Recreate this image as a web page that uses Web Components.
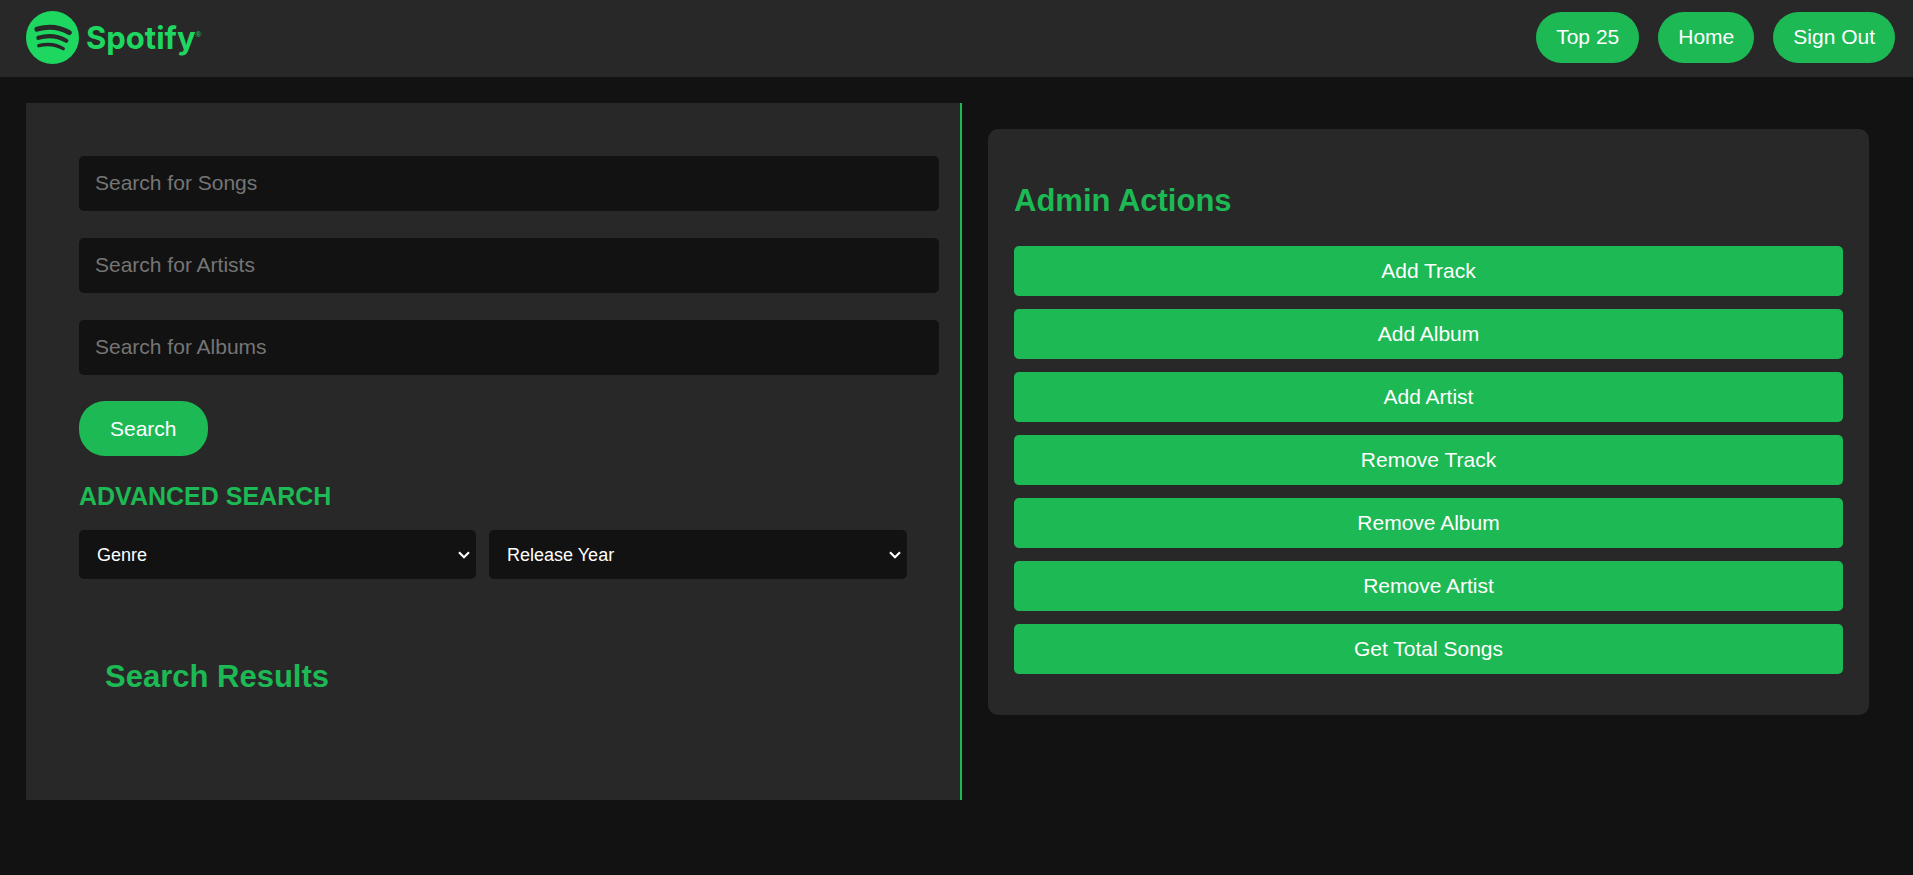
<!DOCTYPE html>
<html lang="en">
<head>
<meta charset="utf-8">
<meta name="viewport" content="width=device-width, initial-scale=1">
<title>Spotify Admin</title>
<style>
  :root {
    --bg: #121212;
    --panel: #282828;
    --green: #1db954;
    --logo: #1ed760;
  }
  body {
    margin: 0;
    background: var(--bg);
    color: #fff;
    font-family: "Liberation Sans", Arial, sans-serif;
    font-size: 21px;
  }
</style>
</head>
<body>
<app-shell>
  <app-header slot="header">
    <pill-button>Top 25</pill-button>
    <pill-button>Home</pill-button>
    <pill-button>Sign Out</pill-button>
  </app-header>
  <search-panel>
    <search-field label="Search for Songs"></search-field>
    <search-field label="Search for Artists"></search-field>
    <search-field label="Search for Albums"></search-field>
  </search-panel>
  <admin-card>
    <action-button>Add Track</action-button>
    <action-button>Add Album</action-button>
    <action-button>Add Artist</action-button>
    <action-button>Remove Track</action-button>
    <action-button>Remove Album</action-button>
    <action-button>Remove Artist</action-button>
    <action-button>Get Total Songs</action-button>
  </admin-card>
</app-shell>

<script>
function define(name, render) {
  customElements.define(name, class extends HTMLElement {
    constructor() {
      super();
      this.attachShadow({ mode: 'open' }).innerHTML = render(this);
    }
  });
}

define('app-shell', () => `
  <style>
    :host { display: block; }
    main {
      display: grid;
      grid-template-columns: minmax(0, 17fr) minmax(0, 16fr);
      column-gap: 26px;
      align-items: start;
      padding: 26px 44px 26px 26px;
    }
  </style>
  <slot name="header"></slot>
  <main><slot></slot></main>`);

define('brand-logo', () => `
  <style>
    :host { display: block; }
    a { display: flex; align-items: center; gap: 7px; color: var(--logo); text-decoration: none; }
    svg { display: block; width: 53px; height: 53px; }
    .disc { fill: currentColor; }
    .waves { fill: none; stroke: var(--panel); stroke-linecap: round; }
    .word { display: flex; align-items: center; font: 700 31px/40px Inter, sans-serif; font-variant-ligatures: none; }
    .mark { font: 400 8px/10px "Liberation Sans", sans-serif; padding-bottom: 6px; }
  </style>
  <a href="#">
    <svg viewBox="0 0 53 53" aria-hidden="true">
      <circle class="disc" cx="26.5" cy="26.5" r="26.5"/>
      <g class="waves">
        <path stroke-width="5" d="M11 18.2Q28.5 13.2 43.3 21.6"/>
        <path stroke-width="4.2" d="M12.4 26.8Q27.5 22.4 40.3 29.8"/>
        <path stroke-width="3.4" d="M12.8 34.7Q26.3 31.3 37.2 37.6"/>
      </g>
    </svg>
    <span class="word">Spotify<span class="mark">®</span></span>
  </a>`);

define('app-header', () => `
  <style>
    :host { display: block; }
    header {
      display: flex;
      align-items: center;
      justify-content: space-between;
      padding: 11px 18px 13px 26px;
      background: var(--panel);
    }
    nav { display: flex; gap: 19px; }
  </style>
  <header>
    <brand-logo></brand-logo>
    <nav><slot></slot></nav>
  </header>`);

define('pill-button', () => `
  <style>
    :host { display: block; }
    button {
      display: block;
      padding: 12px 20px 14px;
      border: 0;
      border-radius: 26px;
      background: var(--green);
      color: #fff;
      font: inherit;
      line-height: 25px;
      cursor: pointer;
    }
    :host([large]) button { padding: 15px 31px; }
  </style>
  <button type="button"><slot></slot></button>`);

define('search-field', el => `
  <style>
    :host { display: block; }
    input {
      display: block;
      width: 100%;
      height: 25px;
      padding: 14px 16px 16px;
      border: 0;
      border-radius: 5px;
      background: var(--bg);
      color: #fff;
      font: inherit;
    }
    input::placeholder { color: #757575; }
  </style>
  <input type="text" aria-label="${el.getAttribute('label')}" placeholder="${el.getAttribute('label')}">`);

define('section-title', () => `
  <style>
    :host { display: block; }
    h2 { margin: 27px 0; color: var(--green); font-size: 31px; line-height: 37px; }
  </style>
  <h2><slot></slot></h2>`);

define('filter-select', el => `
  <style>
    :host { display: grid; min-width: 0; align-items: center; }
    select {
      grid-area: 1 / 1;
      appearance: none;
      width: 100%;
      height: 49px;
      padding: 0 26px 0 18px;
      border: 0;
      border-radius: 5px;
      background-color: var(--bg);
      color: #fff;
      font: inherit;
      font-size: 18px;
    }
    svg {
      grid-area: 1 / 1;
      justify-self: end;
      width: 12px;
      height: 8px;
      margin-right: 6px;
      pointer-events: none;
    }
  </style>
  <select aria-label="${el.getAttribute('label')}"><option>${el.getAttribute('label')}</option></select>
  <svg viewBox="0 0 12 8" aria-hidden="true"><path d="M1 1.2 6 6.2 11 1.2" fill="none" stroke="#fff" stroke-width="2.2"/></svg>`);

define('search-panel', () => `
  <style>
    :host {
      display: block;
      padding: 53px 53px 52px;
      border-right: 2px solid var(--green);
      background: var(--panel);
    }
    .fields { display: grid; gap: 27px; margin-bottom: 26px; }
    pill-button { width: fit-content; }
    h3 { margin: 26px 0 19px; color: var(--green); font-size: 25px; line-height: 29px; text-transform: uppercase; }
    .filters { display: grid; grid-template-columns: minmax(0, 19fr) minmax(0, 20fr); gap: 13px; }
    .results { display: flow-root; margin-top: 26px; padding: 26px; }
  </style>
  <div class="fields"><slot></slot></div>
  <pill-button large>Search</pill-button>
  <h3>Advanced Search</h3>
  <div class="filters">
    <filter-select label="Genre"></filter-select>
    <filter-select label="Release Year"></filter-select>
  </div>
  <div class="results"><section-title>Search Results</section-title></div>`);

define('action-button', () => `
  <style>
    :host { display: block; }
    button {
      display: block;
      width: 100%;
      padding: 12px 13px 13px;
      border: 0;
      border-radius: 5px;
      background: var(--green);
      color: #fff;
      font: inherit;
      line-height: 25px;
      cursor: pointer;
    }
  </style>
  <button type="button"><slot></slot></button>`);

define('admin-card', () => `
  <style>
    :host {
      display: flow-root;
      margin-top: 26px;
      padding: 26px;
      border-radius: 10px;
      background: var(--panel);
    }
    .actions { display: grid; gap: 13px; margin-bottom: 15px; }
  </style>
  <section-title>Admin Actions</section-title>
  <div class="actions"><slot></slot></div>`);
</script>
</body>
</html>
